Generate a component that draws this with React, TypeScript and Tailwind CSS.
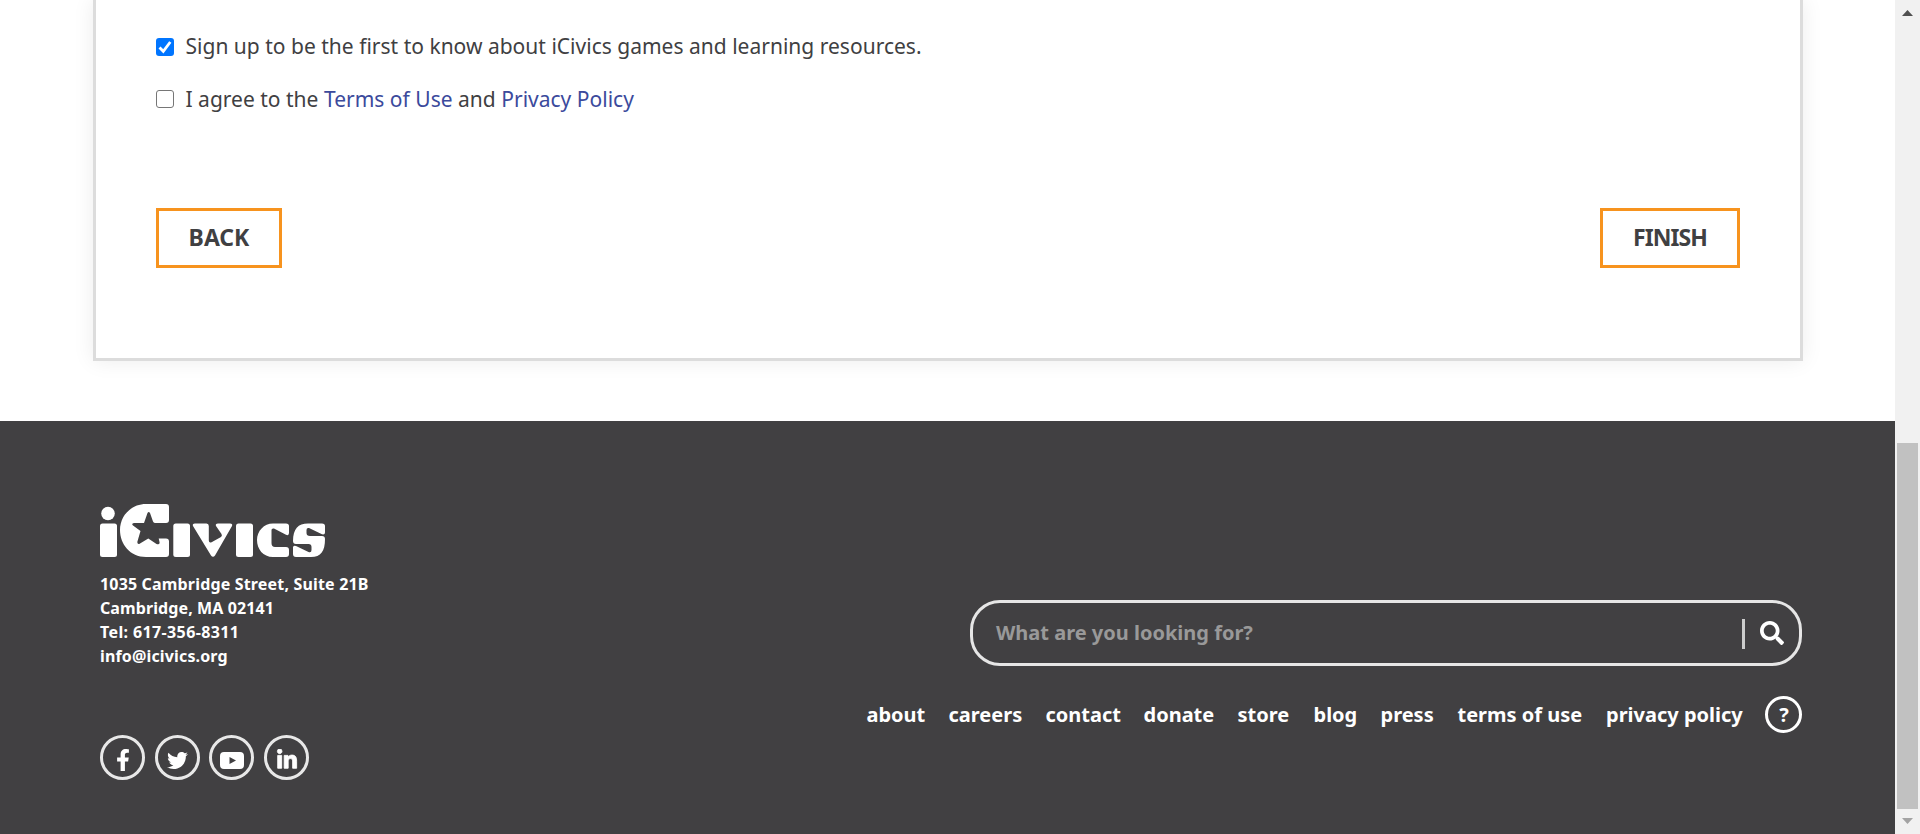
import { FaFacebookF, FaTwitter, FaLinkedinIn, FaSearch } from "react-icons/fa";

const links = [
  { label: "about", cls: "w-[58px]" },
  { label: "careers", cls: "w-[73px]" },
  { label: "contact", cls: "w-[74px]" },
  { label: "donate", cls: "w-[70px]" },
  { label: "store", cls: "w-[52px]" },
  { label: "blog", cls: "w-[43px]" },
  { label: "press", cls: "w-[53px]" },
  { label: "terms of use", cls: "w-[124.500px]" },
  { label: "privacy policy", cls: "w-[138px]" },
];

function Logo() {
  return (
    <svg viewBox="0 0 226 54" className="block h-[54px] w-[226px]" fill="#fff" aria-label="iCivics">
      <circle cx="8" cy="9.5" r="6.8" />
      <rect x="0" y="19.5" width="17" height="33.5" rx="2.5" />
      <path
        fillRule="evenodd"
        d="M46 0H66Q69 0 69 3V16Q69 19 66 19H55.500Q53.700 19 53 17.500L50 9Q48.700 7 47.500 9L44 19H34Q31 19.500 33 21.500L40.500 27L37.300 38Q37.500 41 40 39.500L48.300 34.500L56.500 40Q60 41 59.500 38L58.700 34.500H66Q69 34.500 69 37.500V50Q69 53 66 53H46C30 53 20 40 20 26S31 0 46 0Z"
      />
      <rect x="73.300" y="19.500" width="16.700" height="33.500" rx="2.500" />
      <path d="M95 19.500H106.500Q108.800 19.500 108.800 22V36.500Q109 39.500 112 38L121 33Q122.500 32 121.500 30L116 22Q115 19.500 118 19.500H130Q133 19.500 132 22L115 51.500Q113 54 111 51.500L93 22Q92 19.500 95 19.500Z" />
      <rect x="136" y="19.500" width="17" height="33.500" rx="2.500" />
      <path d="M173 19.500H186Q189 19.500 189 22V29Q189 32 186 30.800L174 24.500Q171.500 24 171.500 26V39Q171.500 43 175 43H186Q189 43 189 46V50Q189 53 186 53H173C163 53 157 45 157 36S164 19.500 173 19.500Z" />
      <path d="M208 19.500H222Q225 19.500 225 22V28.500Q225 31 222 30.300L209 24Q206.500 23.500 206.500 26V29Q206.500 32 210 32H222Q225 32 225 35C225 47 221 53 211 53H196Q193 53 193 50V43.500Q193 41 196 42L208.500 48Q211.500 49 211.500 46V43Q211.500 40 208.500 40H196Q193 40 193 37C193 25 198 19.500 208 19.500Z" />
    </svg>
  );
}

function Youtube() {
  return (
    <svg viewBox="0 0 24 17" className="h-[17px] w-6" fill="#fff">
      <path fillRule="evenodd" d="M4 0H20Q24 0 24 4V13Q24 17 20 17H4Q0 17 0 13V4Q0 0 4 0ZM9.500 5V12L16 8.500Z" />
    </svg>
  );
}

export default function App() {
  return (
    <div className="flex h-[834px] w-[1920px] overflow-hidden bg-white font-['Noto_Sans',sans-serif] text-[#404042]">
      <div className="flex w-[1895px] flex-col">
        <main className="h-[421px] px-[93px]">
          <section className="h-[361px] w-[1710px] border-x-[3px] border-b-[3px] border-[#dcdcdc] px-[60px] pt-5 shadow-[0_0_20px_rgba(0,0,0,0.08)]">
            <label className="flex h-[54px] items-center text-[21px] tracking-[0.010px]">
              <span className="mr-[11.500px] flex size-[18px] items-center justify-center rounded-[3px] bg-[#0075ff]">
                <svg viewBox="0 0 18 18" className="size-[18px]" fill="none" stroke="#fff" strokeWidth="2.800">
                  <path d="M3.500 9.500L7.300 13.300L14.300 4" />
                </svg>
              </span>
              <span>Sign up to be the first to know about iCivics games and learning resources.</span>
            </label>
            <label className="flex h-[50px] items-center text-[21px] tracking-[0.010px]">
              <span className="mr-[11.500px] size-[18px] rounded-[3px] border border-[#767676] bg-white" />
              <span className="pt-[2px]">
                I agree to the <a className="text-[#3b4a9c]">Terms of Use</a> and <a className="text-[#3b4a9c]">Privacy Policy</a>
              </span>
            </label>
            <div className="mt-[84px] flex justify-between text-[23px] font-bold">
              <button className="h-[60px] w-[126px] border-[3px] border-[#f7931e] pb-px">BACK</button>
              <button className="h-[60px] w-[140px] border-[3px] border-[#f7931e] pb-px tracking-[-0.900px]">FINISH</button>
            </div>
          </section>
        </main>
        <footer className="flex h-[413px] justify-between bg-[#414042] pr-[93px] pl-[100px] font-bold text-white">
          <div className="pt-[83px]">
            <Logo />
            <address className="mt-[14px] text-[16px] leading-6 not-italic">
              <p className="tracking-[0.170px]">1035 Cambridge Street, Suite 21B</p>
              <p className="tracking-[0.100px]">Cambridge, MA 02141</p>
              <p className="tracking-[0.380px]">Tel: 617-356-8311</p>
              <p className="tracking-[0.150px]">info@icivics.org</p>
            </address>
            <div className="mt-[67px] flex gap-[9.700px]">
              <a className="flex size-[45px] items-center justify-center rounded-full border-[3px] border-[#e8e8e8] pt-1"><FaFacebookF size={22} /></a>
              <a className="flex size-[45px] items-center justify-center rounded-full border-[3px] border-[#e8e8e8] pt-[5px]"><FaTwitter size={21} /></a>
              <a className="flex size-[45px] items-center justify-center rounded-full border-[3px] border-[#e8e8e8] pt-[5px]"><Youtube /></a>
              <a className="flex size-[45px] items-center justify-center rounded-full border-[3px] border-[#e8e8e8] pt-[5px]"><FaLinkedinIn size={22} stroke="#fff" strokeWidth={20} /></a>
            </div>
          </div>
          <div className="flex flex-col items-end pt-[179px]">
            <div className="flex h-[66px] w-[832px] items-center rounded-[30px] border-[3px] border-[#e6e6e6] pr-[15px] pl-[23px]">
              <span className="flex-1 text-[20px] text-[#999]">What are you looking for?</span>
              <span className="mt-[2px] mr-[15px] h-[30px] w-[3px] bg-[#ccc]" />
              <FaSearch size={24} />
            </div>
            <nav className="mt-[30px] flex h-[37px] items-center gap-6 text-[20px] whitespace-nowrap">
              {links.map((l) => (
                <a key={l.label} className={l.cls}>{l.label}</a>
              ))}
              <a className="-ml-[3px] flex size-[37px] items-center justify-center rounded-full border-[3px] border-white pl-px">?</a>
            </nav>
          </div>
        </footer>
      </div>
      <div className="flex w-[25px] flex-col items-center bg-[#f1f1f1]">
        <svg viewBox="0 0 11 6" className="mt-[10px] h-[6px] w-[11px]" fill="#505050"><path d="M0 6L5.500 0L11 6Z" /></svg>
        <div className="mt-[427px] h-[366px] w-[21px] bg-[#c1c1c1]" />
        <svg viewBox="0 0 11 6" className="mt-[9px] h-[6px] w-[11px]" fill="#a3a3a3"><path d="M0 0L5.500 6L11 0Z" /></svg>
      </div>
    </div>
  );
}
